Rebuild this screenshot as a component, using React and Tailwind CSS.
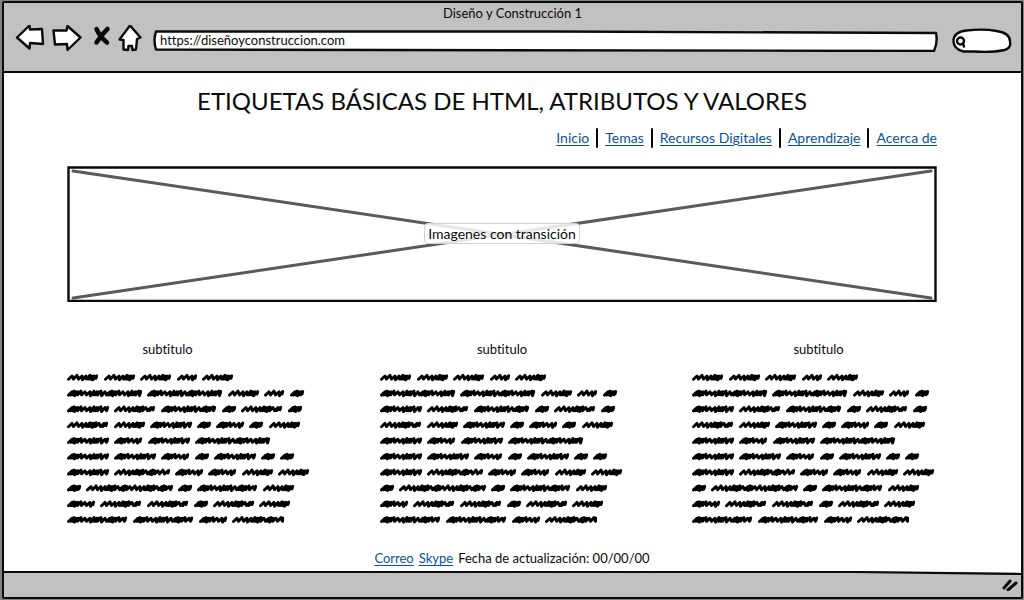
const INK = '#0a0a0a';

// Each word is [start, width] in pixels from the left edge of the paragraph.
const LINES = [
  [[0, 31], [37, 31], [73, 31], [110, 20], [135, 31]],
  [[0, 75], [80, 75], [161, 31], [197, 20], [223, 14]],
  [[0, 42], [47, 41], [94, 55], [155, 14], [174, 41], [221, 14]],
  [[0, 41], [47, 31], [83, 42], [130, 14], [149, 28], [182, 14], [202, 31]],
  [[0, 42], [47, 28], [81, 42], [128, 75]],
  [[0, 42], [47, 42], [94, 28], [128, 14], [147, 42], [194, 14], [213, 14]],
  [[0, 42], [47, 56], [108, 28], [141, 28], [175, 31], [211, 31]],
  [[0, 14], [19, 87], [111, 14], [130, 60], [196, 31]],
  [[0, 28], [33, 41], [80, 41], [127, 14], [146, 41], [192, 31]],
  [[0, 60], [66, 60], [132, 28], [165, 52]],
];

// Horizontal advance of successive pen strokes: small steps look dense.
const DENSE = [2, 2, 2, 3, 4, 5, 4, 3, 2, 2, 4, 5];
const LIGHT = [5, 5, 4, 4, 2, 2, 2, 3, 5, 2, 2, 3];
const LIGHT_WIDTHS = [20, 31, 41, 52, 56, 87];

function scribble(start, width, y) {
  const steps = LIGHT_WIDTHS.includes(width) ? LIGHT : DENSE;
  let x = start + 1.5;
  let i = 0;
  let d = `M${x} ${y + 1.8}`;
  while (x < start + width - 6) {
    const step = steps[i % steps.length];
    d += `L${x + 3.5} ${y - (i % 3 === 1 ? 2.2 : 1.5)}`;
    x += step;
    d += `L${x} ${y + (i % 4 === 2 ? 2.4 : 1.6)}`;
    i += 1;
  }
  return d + `L${start + width - 1.3} ${y - 1.8}L${start + width - 2} ${y + 0.8}`;
}

const SCRIBBLES = LINES.flatMap((line, row) =>
  line.map(([x, w]) => scribble(x, w, 4.5 + row * 15.8))
).join('');

function Column({ offset }) {
  return (
    <article className="w-[245px]">
      <h2 className={`text-center text-[13px] leading-4 ${offset}`}>subtitulo</h2>
      <svg className="mt-4 block h-[152px] w-[245px] overflow-visible" viewBox="0 0 245 152" aria-hidden="true">
        <path d={SCRIBBLES} fill="none" stroke="#000" strokeWidth="2.9" strokeLinecap="round" strokeLinejoin="round" />
      </svg>
    </article>
  );
}

function Sketch({ children, className, viewBox, ...rest }) {
  return (
    <svg className={className} viewBox={viewBox} fill="#fff" stroke={INK} strokeWidth="2.4" strokeLinejoin="round" strokeLinecap="round" aria-hidden="true" {...rest}>
      {children}
    </svg>
  );
}

const NAV = ['Inicio', 'Temas', 'Recursos Digitales', 'Aprendizaje', 'Acerca de'];
const LINK = 'text-[#0b5394] underline underline-offset-2 decoration-1';

export default function App() {
  return (
    <div className="min-h-screen flex bg-[#7f857f] pt-px pb-px pl-[2px] pr-px font-['Lato','Open_Sans',sans-serif] text-[#0a0a0a] [font-variant-ligatures:none]">
      <div className="flex flex-1 flex-col rounded-[2px] border-2 border-[#0a0a0a] bg-white">
        <header className="h-[70px] border-b-2 border-[#0a0a0a] bg-[#c1c1c1] pt-[2px]">
          <p className="text-center text-[13px] leading-4">Diseño y Construcción 1</p>
          <div className="flex items-center pl-[11px] pr-[9px] pt-1">
            <button aria-label="Atrás" className="h-[28px] w-[30px]">
              <Sketch className="h-[28px] w-[30px]" viewBox="0 0 30 28">
                <path d="M2 12.500 14.500 0.500 15 4.500 27 4 28 19 15 18 14.500 23.500Z" />
              </Sketch>
            </button>
            <button aria-label="Adelante" className="ml-[7px] h-[28px] w-[30px]">
              <Sketch className="h-[28px] w-[30px]" viewBox="0 0 30 28">
                <path d="M1.500 5.500 14.500 5.500 15.500 1 28.500 12.500 15.500 25 15 19 3 19.500Z" />
              </Sketch>
            </button>
            <button aria-label="Detener" className="ml-[10px] h-[28px] w-[20px]">
              <Sketch className="h-[28px] w-[20px]" viewBox="0 0 20 28" strokeWidth="4.500">
                <path d="M4.500 4Q8 12 15 17.500M15.500 4Q10 9 4.500 17.500" fill="none" />
              </Sketch>
            </button>
            <button aria-label="Inicio" className="ml-[6px] h-[28px] w-[24px]">
              <Sketch className="h-[28px] w-[24px]" viewBox="0 0 24 28">
                <path d="M12 0.500 22.500 12.500 19 14 18 24.500 14.500 25 14 21 10.500 21 10 25 5.500 24.500 5.500 15 1.500 14.500Z" />
              </Sketch>
            </button>
            <div className="relative ml-[11px] mt-[3px] h-[22px] flex-1">
              <Sketch className="absolute inset-0 h-full w-full" viewBox="0 0 784 22" preserveAspectRatio="none">
                <path d="M3 1.500 400 1.500 782 3Q784 12 780 21L3 19.500Q0 10 3 1.500Z" />
              </Sketch>
              <input aria-label="Dirección" defaultValue="https://diseñoyconstruccion.com" className="relative block h-[21px] w-full bg-transparent px-[7px] text-[13px] outline-none" />
            </div>
            <div className="relative ml-[13px] mt-[3px] h-[25px] w-[61px]">
              <Sketch className="absolute inset-0 h-full w-full" viewBox="0 0 60 25">
                <path d="M2 13Q2 4 15 2.500Q32 0.500 45 3Q59 5 58.500 14Q60 20 53 22Q38 25 24 23.500L12 23.500Q2 21 2 13Z" />
                <circle cx="9" cy="13" r="3.500" />
                <path d="M11.500 15.500 12.500 18.500" />
              </Sketch>
              <input aria-label="Buscar" type="search" className="relative block h-full w-full bg-transparent pl-5 pr-2 text-[13px] outline-none" />
            </div>
          </div>
        </header>

        <main className="flex flex-1 flex-col pl-[63px] pr-[84px]">
          <h1 className="mt-3 text-center text-[24px] leading-8">ETIQUETAS BÁSICAS DE HTML, ATRIBUTOS Y VALORES</h1>
          <nav className="mt-[11px] flex items-center justify-end text-[14px] leading-5">
            {NAV.map((name, i) => (
              <span key={name} className="flex items-center">
                {i > 0 && <span className="mx-[7px] h-5 w-[2px] rounded bg-[#0a0a0a]" />}
                <a href="#" className={LINK}>{name}</a>
              </span>
            ))}
          </nav>
          <section className="relative mt-[17px] flex h-[137px] items-center justify-center">
            <svg className="absolute inset-0 h-full w-full" viewBox="0 0 870 137" preserveAspectRatio="none" aria-hidden="true">
              <path d="M6 6 864 133M6 133 864 6" stroke="#5a5a5a" strokeWidth="3" strokeLinecap="round" />
              <path d="M1.500 2.500 868.500 2.500 868.500 136 1.500 136Z" fill="none" stroke={INK} strokeWidth="2.400" />
            </svg>
            <p className="relative rounded-[4px] border border-[#d0d0d0] bg-white/85 px-[3px] text-[14px] leading-[19px]">Imagenes con transición</p>
          </section>
          <section className="mt-[39px] flex justify-between">
            <Column offset="pr-11" />
            <Column offset="" />
            <Column offset="pl-2" />
          </section>
          <p className="mt-auto flex items-center justify-center gap-[5px] pb-[3px] pl-5 text-[13px] leading-5">
            <a href="#" className={LINK}>Correo</a>
            <a href="#" className={LINK}>Skype</a>
            <span>Fecha de actualización: 00/00/00</span>
          </p>
        </main>

        <footer className="relative flex h-[26px] items-center justify-end bg-[#c1c1c1] pr-[3px]">
          <svg className="absolute inset-x-0 top-0 h-1 w-full" viewBox="0 0 1017 4" preserveAspectRatio="none" aria-hidden="true">
            <path d="M850 0H1017V2Z" fill="#fff" />
            <path d="M0 1 H850L1017 3" fill="none" stroke={INK} strokeWidth="2.200" />
          </svg>
          <svg className="relative h-[14px] w-[16px]" viewBox="0 0 16 14" aria-hidden="true">
            <path d="M2 11 8 4M6 13 14 6" stroke={INK} strokeWidth="3" strokeLinecap="round" />
          </svg>
        </footer>
      </div>
    </div>
  );
}
